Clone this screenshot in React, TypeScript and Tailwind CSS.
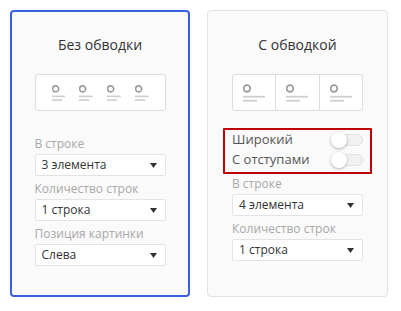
import React from "react";

const font = { fontFamily: '"Open Sans", "Liberation Sans", sans-serif' };

function Arrow() {
  return (
    <svg width="7" height="5" viewBox="0 0 7 5" className="block">
      <path d="M0 0 L7 0 L3.5 5 Z" fill="#333" />
    </svg>
  );
}

function Select({ value }: { value: string }) {
  return (
    <div className="h-[22px] w-full bg-white border border-[#e3e3e3] rounded-[2px] flex items-center justify-between pl-[6px] pr-[8px] text-[12px] text-[#333]">
      <span>{value}</span>
      <Arrow />
    </div>
  );
}

function Field({ label, value }: { label: string; value: string }) {
  return (
    <div className="flex flex-col w-full">
      <div className="h-[16px] leading-[16px] text-[12px] text-[#a8a8a8] mb-[2px]">{label}</div>
      <Select value={value} />
    </div>
  );
}

function Glyph({ w1, w2 }: { w1: number; w2: number }) {
  return (
    <svg width={w1} height="18" viewBox={`0 0 ${w1} 18`} className="block">
      <circle cx="4" cy="4.5" r="3.3" fill="none" stroke="#9a9a9a" strokeWidth="1.7" />
      <rect x="0" y="11.8" width={w1} height="1.8" fill="#cfcfcf" />
      <rect x="0" y="15.8" width={w2} height="1.8" fill="#cfcfcf" />
    </svg>
  );
}

function Toggle() {
  return (
    <div className="relative w-[32px] h-[16px] flex items-center">
      <div className="w-[32px] h-[12px] rounded-full bg-[#f1f1f1] border border-[#e3e3e3]" />
      <div className="absolute left-0 top-0 w-[16px] h-[16px] rounded-full bg-white shadow-[0_1px_3px_rgba(0,0,0,0.3)]" />
    </div>
  );
}

export default function App() {
  return (
    <div className="w-[401px] h-[311px] bg-white pt-[10px] pl-[10px] flex gap-[17px]" style={font}>
      <div className="w-[180px] h-[287px] bg-[#fafafa] border-2 border-[#3a5fe0] rounded-[4px] flex flex-col items-center pt-[23px]">
        <div className="h-[20px] leading-[20px] text-[14px] text-[#333]">Без обводки</div>
        <div className="mt-[19px] w-[131px] h-[37px] bg-white border border-[#dcdcdc] rounded-[3px] flex items-center gap-[14px] px-[16px]">
          <Glyph w1={15} w2={11} />
          <Glyph w1={15} w2={11} />
          <Glyph w1={15} w2={11} />
          <Glyph w1={15} w2={11} />
        </div>
        <div className="mt-[25px] w-[131px] flex flex-col gap-[5px]">
          <Field label="В строке" value="3 элемента" />
          <Field label="Количество строк" value="1 строка" />
          <Field label="Позиция картинки" value="Слева" />
        </div>
      </div>
      <div className="w-[181px] h-[287px] bg-[#fafafa] border border-[#e2e2e2] rounded-[4px] flex flex-col items-center pt-[24px]">
        <div className="h-[20px] leading-[20px] text-[14px] text-[#333]">С обводкой</div>
        <div className="mt-[19px] w-[131px] h-[37px] bg-white border border-[#dcdcdc] rounded-[3px] flex">
          <div className="flex-1 flex items-center justify-center border-r border-[#dcdcdc]">
            <Glyph w1={22} w2={14} />
          </div>
          <div className="flex-1 flex items-center justify-center border-r border-[#dcdcdc]">
            <Glyph w1={22} w2={14} />
          </div>
          <div className="flex-1 flex items-center justify-center">
            <Glyph w1={22} w2={14} />
          </div>
        </div>
        <div className="mt-[19px] w-[131px] relative flex flex-col">
          <div className="h-[20px] flex items-center justify-between text-[13px] text-[#555]">
            <span>Широкий</span>
            <Toggle />
          </div>
          <div className="h-[20px] flex items-center justify-between text-[13px] text-[#555]">
            <span>С отступами</span>
            <Toggle />
          </div>
          <div className="absolute -left-[9px] -right-[9px] -top-[2px] -bottom-[4px] border-2 border-[#c00000] rounded-[1px]" />
        </div>
        <div className="mt-[6px] w-[131px] flex flex-col gap-[5px]">
          <Field label="В строке" value="4 элемента" />
          <Field label="Количество строк" value="1 строка" />
        </div>
      </div>
    </div>
  );
}
